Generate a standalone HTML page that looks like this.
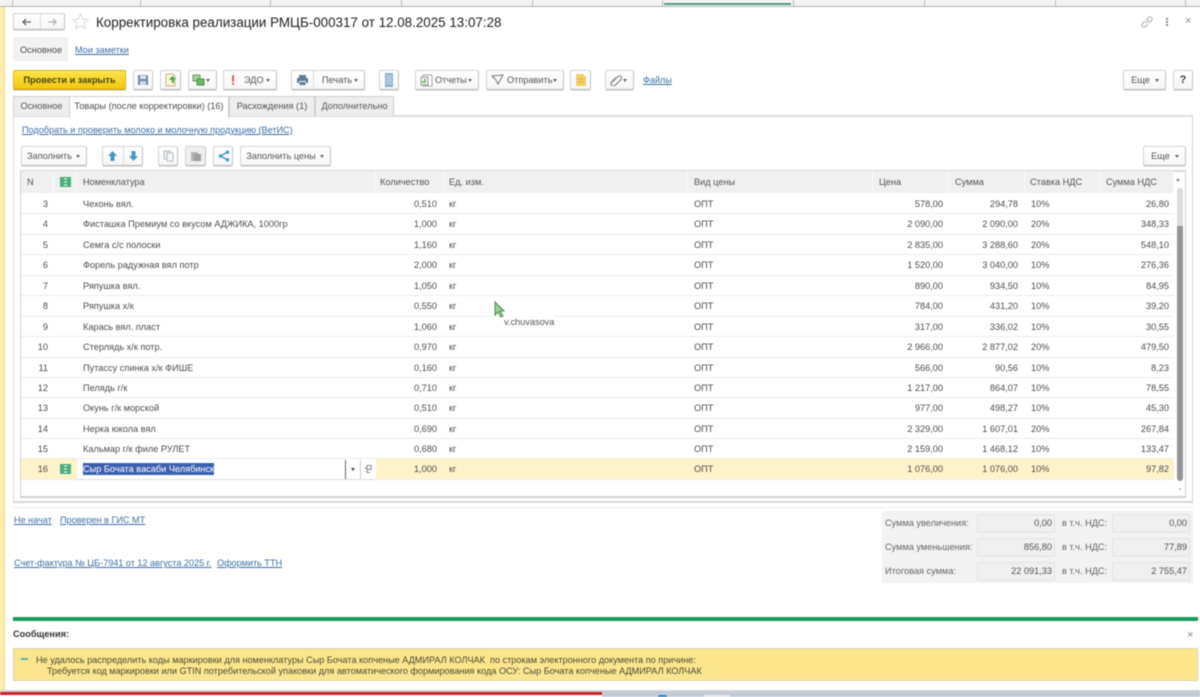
<!DOCTYPE html>
<html lang="ru"><head><meta charset="utf-8"><title>Корректировка реализации</title>
<style>
html,body{margin:0;padding:0;background:#fff}
#p{position:relative;width:1200px;height:697px;overflow:hidden;background:#fff;font:9.2px/12px "Liberation Sans","Noto Sans CJK SC",sans-serif;color:#4d4d4d;filter:blur(.45px)}
#p div,#p span,#p a,#p svg{position:absolute}
.t{white-space:nowrap}
a{color:#3b6ea8;text-decoration:underline;white-space:nowrap;font-size:9.1px}
.b{box-sizing:border-box;background:linear-gradient(#fff,#f6f6f6);border:1px solid #d2d2d2;border-bottom:1px solid #b4b4b4;border-right-color:#c4c4c4;border-radius:2px;height:20px;top:70px;white-space:nowrap;text-align:center;line-height:18px;color:#555;box-shadow:0 1px 0 #e4e4e4}
.c::after{content:"";position:absolute;right:6px;top:8px;border:2px solid transparent;border-top:3px solid #666;border-bottom:0}
.d{top:0;bottom:0;width:1px;background:#ddd}
.tab{box-sizing:border-box;top:96px;height:20px;background:#eeeeee;border:1px solid #cfcfcf;border-bottom:0;text-align:center;line-height:18px;white-space:nowrap;color:#555}
.h{top:171px;height:22px;background:#f0f0f0;border-right:1px solid #fafafa;box-sizing:border-box;line-height:22px;padding-left:5px;color:#555;white-space:nowrap}
.r{left:21px;width:1153px;height:20px;border-bottom:1px solid #ececec;box-sizing:border-box}
.r span{top:4px;white-space:nowrap}
.n{left:0;width:27px;text-align:right}
.g{left:62px}
.q{left:340px;width:76px;text-align:right}
.u{left:428px}
.v{left:673px}
.pr{left:850px;width:72px;text-align:right}
.s{left:930px;width:67px;text-align:right}
.nd{left:1010px}
.x{left:1080px;width:68px;text-align:right}
.f{box-sizing:border-box;background:#efefef;border:1px solid #e2e2e2;width:78px;height:19px;text-align:right;padding-right:2px;line-height:17px;color:#555;border-radius:2px}
.l{color:#666;white-space:nowrap}
.m{color:#4a4a35;font-size:9.15px}
</style></head><body><div id="p">

<div style="left:0;top:0;width:1200px;height:6px;background:#f2f2f2;border-bottom:1px solid #b5b5b5"></div>
<div style="left:12px;top:0;width:1px;height:6px;background:#bbb"></div>
<div style="left:140px;top:0;width:1px;height:6px;background:#bbb"></div>
<div style="left:270px;top:0;width:1px;height:6px;background:#bbb"></div>
<div style="left:401px;top:0;width:1px;height:6px;background:#bbb"></div>
<div style="left:532px;top:0;width:1px;height:6px;background:#bbb"></div>
<div style="left:662px;top:0;width:1px;height:6px;background:#bbb"></div>
<div style="left:793px;top:0;width:1px;height:6px;background:#bbb"></div>
<div style="left:924px;top:0;width:1px;height:6px;background:#bbb"></div>
<div style="left:1055px;top:0;width:1px;height:6px;background:#bbb"></div>
<div style="left:1185px;top:0;width:1px;height:6px;background:#bbb"></div>
<div style="left:664px;top:3px;width:127px;height:2px;background:#4d9a7c"></div>
<div style="left:0;top:7px;width:4px;height:683px;background:#fdeca2;border-right:1px solid #e6dfa8"></div>

<div class="b" style="left:13px;top:13px;width:52px;height:17px"><div class="d" style="left:26px"></div>
<svg style="left:7px;top:3px" width="12" height="10" viewBox="0 0 12 10"><path d="M2 5h8M5 2L2 5l3 3" fill="none" stroke="#666" stroke-width="1.3"/></svg>
<svg style="left:32px;top:3px" width="12" height="10" viewBox="0 0 12 10"><path d="M2 5h8M7 2l3 3-3 3" fill="none" stroke="#b0b0b0" stroke-width="1.3"/></svg></div>
<svg style="left:72px;top:13px" width="17" height="17" viewBox="0 0 18 18"><path d="M9 1l2.300 5.400 5.700.5-4.300 3.800 1.300 5.700L9 13.400 4 16.400l1.300-5.700L1 6.900l5.700-.5z" fill="#fff" stroke="#d6d6d6"/></svg>
<div class="t" style="left:96px;top:14px;font-size:13.4px;line-height:17px;color:#222">Корректировка реализации РМЦБ-000317 от 12.08.2025 13:07:28</div>
<svg style="left:1140px;top:15px" width="14" height="14" viewBox="0 0 14 14"><path d="M6 8l3-3M5 6L2.500 8.500a2 2 0 003 3L8 9M6 5l2.500-2.500a2 2 0 013 3L9 8" fill="none" stroke="#aaa"/></svg>
<div style="left:1166px;top:18px;width:2px;height:2px;background:#888;box-shadow:0 3px 0 #888,0 6px 0 #888"></div>
<div class="t" style="left:1185px;top:15px;color:#888;font-size:11px">×</div>

<div style="left:13px;top:37px;width:55px;height:24px;background:#f2f2f2;border-radius:2px"></div>
<div class="t" style="left:20px;top:44px">Основное</div>
<a style="left:75px;top:44px">Мои заметки</a>

<div class="b" style="left:13px;width:113px;background:linear-gradient(#fde548,#f2c70d);border-color:#d9b41f;border-bottom-color:#b39415;color:#4a4612;font-weight:bold">Провести и закрыть</div>
<div class="b" style="left:133px;width:20px"><svg style="left:3px;top:3px" width="12" height="12" viewBox="0 0 12 12"><path d="M1 1h9l1 1v9H1z" fill="#6d8aa8"/><rect x="3" y="1.500" width="6" height="3.500" fill="#dfe7ef"/><rect x="3" y="7" width="6" height="4" fill="#cfd9e3"/></svg></div>
<div class="b" style="left:160px;width:21px"><svg style="left:3px;top:2px" width="14" height="14" viewBox="0 0 14 14"><path d="M2 1h7l2 2v10H2z" fill="#fdf6cf" stroke="#c7b88a"/><path d="M5 7l3-4 4 3-2 1v3H8V7z" fill="#47a95a"/></svg></div>
<div class="b c" style="left:188px;width:29px"><svg style="left:3px;top:3px" width="13" height="12" viewBox="0 0 13 12"><rect x="1" y="1" width="7" height="6" fill="#a8cfa0" stroke="#6b9a62"/><rect x="5" y="5" width="7" height="6" fill="#6fb56f" stroke="#4c8f50"/></svg></div>
<div class="b c" style="left:223px;width:54px"><svg style="left:7px;top:4px" width="4" height="10" viewBox="0 0 5 12"><path d="M1.400 0h2.200v8H1.400zM1.400 9.400h2.200V12H1.400z" fill="#d9434a"/></svg><span class="t" style="left:20px;top:0">ЭДО</span></div>
<div class="b c" style="left:291px;width:74px"><div class="d" style="left:21px"></div><svg style="left:4px;top:3px" width="13" height="12" viewBox="0 0 13 12"><path d="M3 1h7v3H3zM1 4h11v5H10V7H3v2H1zM3.500 8h6v3h-6z" fill="#5d7d99"/></svg><span class="t" style="left:30px;top:0">Печать</span></div>
<div class="b" style="left:379px;width:20px"><svg style="left:5px;top:2px" width="8" height="14" viewBox="0 0 8 14"><rect width="8" height="14" fill="#8fb0cf"/><path d="M1 3h6M1 5.500h6M1 8h6M1 10.500h6" stroke="#dde8f2"/></svg></div>
<div class="b c" style="left:415px;width:64px"><svg style="left:4px;top:3px" width="13" height="13" viewBox="0 0 13 13"><rect x="3" y="1" width="9" height="11" fill="#fff" stroke="#a5a5a5"/><rect x="1" y="3" width="7" height="8" fill="#eef3ea" stroke="#9a9a9a"/><path d="M3 9V7M5 9V5" stroke="#5f9a5b" stroke-width="1.300"/></svg><span class="t" style="left:19px;top:0">Отчеты</span></div>
<div class="b c" style="left:486px;width:78px"><svg style="left:4px;top:3px" width="13" height="12" viewBox="0 0 13 12"><path d="M1 2l11-1-5 9-2-4z" fill="none" stroke="#777"/></svg><span class="t" style="left:20px;top:0">Отправить</span></div>
<div class="b" style="left:570px;width:21px"><svg style="left:5px;top:3px" width="10" height="12" viewBox="0 0 10 12"><path d="M0 0h7l3 3v9H0z" fill="#f2cd68"/><path d="M2 5h6M2 8h6" stroke="#e0b445"/></svg></div>
<div class="b c" style="left:605px;width:29px"><svg style="left:4px;top:3px" width="12" height="12" viewBox="0 0 12 12"><path d="M2.500 8L8 2.500a2 2 0 013 3L5.500 11a2.500 2.500 0 01-4-3L6 3.500" fill="none" stroke="#999" stroke-width="1.500"/></svg></div>
<a style="left:643px;top:74px">Файлы</a>
<div class="b c" style="left:1123px;width:43px;padding-right:8px">Еще</div>
<div class="b" style="left:1173px;width:20px;font-weight:bold;font-size:11px;color:#444">?</div>

<div style="left:13px;top:115px;width:1180px;height:388px;box-sizing:border-box;border:1px solid #d6d6d6;border-top:2px solid #dcdcdc;border-bottom:2px solid #d8d8d8"></div>
<div class="tab" style="left:13px;width:57px">Основное</div>
<div class="tab" style="left:69px;width:160px;height:22px;background:#fff;z-index:2;color:#4d4d4d">Товары (после корректировки) (16)</div>
<div class="tab" style="left:229px;width:86px">Расхождения (1)</div>
<div class="tab" style="left:315px;width:79px">Дополнительно</div>

<a style="left:22px;top:124px">Подобрать и проверить молоко и молочную продукцию (ВетИС)</a>

<div class="b c" style="left:21px;top:146px;width:66px;padding-right:9px">Заполнить</div>
<div class="b" style="left:102px;top:146px;width:41px"><div class="d" style="left:20px"></div>
<svg style="left:4px;top:3px" width="11" height="12" viewBox="0 0 11 12"><path d="M5.500 1L10 6H7.500v5h-4V6H1z" fill="#4a96c8"/></svg>
<svg style="left:25px;top:3px" width="11" height="12" viewBox="0 0 11 12"><path d="M5.500 11L10 6H7.500V1h-4v5H1z" fill="#4a96c8"/></svg></div>
<div class="b" style="left:158px;top:146px;width:20px"><svg style="left:4px;top:3px" width="11" height="12" viewBox="0 0 11 12"><path d="M1 1h6v8H1z" fill="#eef2f5" stroke="#b5bcc2"/><path d="M4 3h6v8H4z" fill="#f5f7f9" stroke="#b5bcc2"/></svg></div>
<div class="b" style="left:185px;top:146px;width:21px;background:#efefef"><svg style="left:4px;top:3px" width="12" height="12" viewBox="0 0 12 12"><path d="M1 2h7v9H1z" fill="#b5b5b5"/><path d="M4 4h7v7H4z" fill="#9f9f9f"/></svg></div>
<div class="b" style="left:213px;top:146px;width:20px"><svg style="left:4px;top:3px" width="12" height="12" viewBox="0 0 12 12"><path d="M9.500 2L2.500 6l7 4" fill="none" stroke="#4a96c8" stroke-width="1.300"/><circle cx="9.500" cy="2.200" r="1.700" fill="#4a96c8"/><circle cx="2.500" cy="6" r="1.700" fill="#4a96c8"/><circle cx="9.500" cy="9.800" r="1.700" fill="#4a96c8"/></svg></div>
<div class="b c" style="left:240px;top:146px;width:91px;padding-right:9px">Заполнить цены</div>
<div class="b c" style="left:1143px;top:146px;width:43px;padding-right:8px">Еще</div>

<div style="left:20px;top:170px;width:1166px;height:328px;box-sizing:border-box;border:1px solid #d2d2d2;border-bottom:2px solid #cfcfcf;border-top:2px solid #d8d8d8"></div>
<div class="h" style="left:21px;width:33px;padding-left:6px">N</div>
<div class="h" style="left:54px;width:23px"><svg style="left:6px;top:6px" width="11" height="10" viewBox="0 0 11 10"><rect width="11" height="10" fill="#4fae7c"/><path d="M4 2h3M4 5h3M4 8h3" stroke="#fff"/></svg></div>
<div class="h" style="left:77px;width:299px;padding-left:6px">Номенклатура</div>
<div class="h" style="left:376px;width:68px;padding-left:4px">Количество</div>
<div class="h" style="left:444px;width:244px">Ед. изм.</div>
<div class="h" style="left:688px;width:185px;padding-left:6px">Вид цены</div>
<div class="h" style="left:873px;width:75px;padding-left:6px">Цена</div>
<div class="h" style="left:948px;width:77px;padding-left:7px">Сумма</div>
<div class="h" style="left:1025px;width:75px">Ставка НДС</div>
<div class="h" style="left:1100px;width:74px;padding-left:6px">Сумма НДС</div>

<div class="r" style="top:194px"><span class="n">3</span><span class="g">Чехонь вял.</span><span class="q">0,510</span><span class="u">кг</span><span class="v">ОПТ</span><span class="pr">578,00</span><span class="s">294,78</span><span class="nd">10%</span><span class="x">26,80</span></div>
<div class="r" style="top:214px;height:21px"><span class="n">4</span><span class="g">Фисташка Премиум со вкусом АДЖИКА, 1000гр</span><span class="q">1,000</span><span class="u">кг</span><span class="v">ОПТ</span><span class="pr">2 090,00</span><span class="s">2 090,00</span><span class="nd">20%</span><span class="x">348,33</span></div>
<div class="r" style="top:235px"><span class="n">5</span><span class="g">Семга с/с полоски</span><span class="q">1,160</span><span class="u">кг</span><span class="v">ОПТ</span><span class="pr">2 835,00</span><span class="s">3 288,60</span><span class="nd">20%</span><span class="x">548,10</span></div>
<div class="r" style="top:255px;height:21px"><span class="n">6</span><span class="g">Форель радужная вял потр</span><span class="q">2,000</span><span class="u">кг</span><span class="v">ОПТ</span><span class="pr">1 520,00</span><span class="s">3 040,00</span><span class="nd">10%</span><span class="x">276,36</span></div>
<div class="r" style="top:276px"><span class="n">7</span><span class="g">Ряпушка вял.</span><span class="q">1,050</span><span class="u">кг</span><span class="v">ОПТ</span><span class="pr">890,00</span><span class="s">934,50</span><span class="nd">10%</span><span class="x">84,95</span></div>
<div class="r" style="top:296px;height:21px"><span class="n">8</span><span class="g">Ряпушка х/к</span><span class="q">0,550</span><span class="u">кг</span><span class="v">ОПТ</span><span class="pr">784,00</span><span class="s">431,20</span><span class="nd">10%</span><span class="x">39,20</span></div>
<div class="r" style="top:317px"><span class="n">9</span><span class="g">Карась вял. пласт</span><span class="q">1,060</span><span class="u">кг</span><span class="v">ОПТ</span><span class="pr">317,00</span><span class="s">336,02</span><span class="nd">10%</span><span class="x">30,55</span></div>
<div class="r" style="top:337px;height:21px"><span class="n">10</span><span class="g">Стерлядь х/к потр.</span><span class="q">0,970</span><span class="u">кг</span><span class="v">ОПТ</span><span class="pr">2 966,00</span><span class="s">2 877,02</span><span class="nd">20%</span><span class="x">479,50</span></div>
<div class="r" style="top:358px"><span class="n">11</span><span class="g">Путассу спинка х/к ФИШЕ</span><span class="q">0,160</span><span class="u">кг</span><span class="v">ОПТ</span><span class="pr">566,00</span><span class="s">90,56</span><span class="nd">10%</span><span class="x">8,23</span></div>
<div class="r" style="top:378px;height:20px"><span class="n">12</span><span class="g">Пелядь г/к</span><span class="q">0,710</span><span class="u">кг</span><span class="v">ОПТ</span><span class="pr">1 217,00</span><span class="s">864,07</span><span class="nd">10%</span><span class="x">78,55</span></div>
<div class="r" style="top:398px;height:21px"><span class="n">13</span><span class="g">Окунь г/к морской</span><span class="q">0,510</span><span class="u">кг</span><span class="v">ОПТ</span><span class="pr">977,00</span><span class="s">498,27</span><span class="nd">10%</span><span class="x">45,30</span></div>
<div class="r" style="top:419px"><span class="n">14</span><span class="g">Нерка юкола вял</span><span class="q">0,690</span><span class="u">кг</span><span class="v">ОПТ</span><span class="pr">2 329,00</span><span class="s">1 607,01</span><span class="nd">20%</span><span class="x">267,84</span></div>
<div class="r" style="top:439px"><span class="n">15</span><span class="g">Кальмар г/к филе РУЛЕТ</span><span class="q">0,680</span><span class="u">кг</span><span class="v">ОПТ</span><span class="pr">2 159,00</span><span class="s">1 468,12</span><span class="nd">10%</span><span class="x">133,47</span></div>
<div class="r" style="top:459px;height:21px;background:#fdf3c9"><span class="n">16</span><span class="q">1,000</span><span class="u">кг</span><span class="v">ОПТ</span><span class="pr">1 076,00</span><span class="s">1 076,00</span><span class="nd">10%</span><span class="x">97,82</span></div>
<svg style="left:60px;top:464px" width="11" height="10" viewBox="0 0 11 10"><rect width="11" height="10" fill="#4fae7c"/><path d="M4 2h3M4 5h3M4 8h3" stroke="#fff"/></svg>
<div style="left:77px;top:459px;width:299px;height:21px;background:#fff;border-bottom:1px solid #ddd;box-sizing:border-box"></div>
<div style="left:345px;top:460px;width:1px;height:19px;background:#666"></div>
<div style="left:360px;top:460px;width:1px;height:19px;background:#ccc"></div>
<div style="left:351px;top:468px;border:2px solid transparent;border-top:3px solid #444;border-bottom:0"></div>
<svg style="left:364px;top:465px" width="8" height="8" viewBox="0 0 8 8"><path d="M3 .5h4v4H3zM.500 3h2.500v4.500h3" fill="none" stroke="#888"/></svg>
<div class="t" style="left:83px;top:463px;background:#3d5fb0;color:#fff;height:12px;line-height:12px;width:131px;overflow:hidden">Сыр Бочата васаби Челябинск</div>

<div style="left:1176px;top:178px;border:2.500px solid transparent;border-bottom:3px solid #888;border-top:0"></div>
<div style="left:1177px;top:188px;width:6px;height:38px;background:#dcdcdc;border-radius:3px 3px 0 0"></div>
<div style="left:1177px;top:226px;width:6px;height:255px;background:#959595;border-radius:0 0 3px 3px"></div>
<div style="left:1178px;top:488px;border:2px solid transparent;border-top:3px solid #ccc;border-bottom:0"></div>

<svg style="left:494px;top:301px;z-index:3" width="11" height="17" viewBox="0 0 11 17"><path d="M1 1v13l3-3 3 5 2-1-3-5h4z" fill="#9ad092" stroke="#4d8a4f"/></svg>
<div class="t" style="left:503px;top:316px;color:#555;background:#fff;padding:0 1px">v.chuvasova</div>

<div style="left:13px;top:507px;width:1180px;border-top:1px dotted #d8d8d8"></div>
<a style="left:14px;top:514px">Не начат</a>
<a style="left:60px;top:514px">Проверен в ГИС МТ</a>
<a style="left:14px;top:557px">Счет-фактура № ЦБ-7941 от 12 августа 2025 г.</a>
<a style="left:217px;top:557px">Оформить ТТН</a>

<div style="left:882px;top:511px;width:311px;height:72px;background:#f2f2f2"></div>
<div class="l" style="left:885px;top:517px">Сумма увеличения:</div>
<div class="l" style="left:885px;top:541px">Сумма уменьшения:</div>
<div class="l" style="left:885px;top:565px">Итоговая сумма:</div>
<div class="l" style="left:1062px;top:517px">в т.ч. НДС:</div>
<div class="l" style="left:1062px;top:541px">в т.ч. НДС:</div>
<div class="l" style="left:1062px;top:565px">в т.ч. НДС:</div>
<div class="f" style="left:977px;top:514px">0,00</div>
<div class="f" style="left:977px;top:538px">856,80</div>
<div class="f" style="left:977px;top:562px">22 091,33</div>
<div class="f" style="left:1112px;top:514px">0,00</div>
<div class="f" style="left:1112px;top:538px">77,89</div>
<div class="f" style="left:1112px;top:562px">2 755,47</div>

<div style="left:13px;top:617px;width:1185px;height:4px;background:#169b5b"></div>
<div class="t" style="left:13px;top:628px;font-weight:bold;color:#333">Сообщения:</div>
<div class="t" style="left:1187px;top:629px;color:#888;font-size:11px">×</div>
<div style="left:13px;top:648px;width:1185px;height:33px;box-sizing:border-box;background:#fde58e;border:1px solid #d9d2a8"></div>
<div style="left:21px;top:658px;width:7px;height:2px;background:#5ab3ad"></div>
<div class="t m" style="left:36px;top:654px">Не удалось распределить коды маркировки для номенклатуры Сыр Бочата копченые АДМИРАЛ КОЛЧАК&nbsp; по строкам электронного документа по причине:</div>
<div class="t m" style="left:47px;top:665px">Требуется код маркировки или GTIN потребительской упаковки для автоматического формирования кода ОСУ: Сыр Бочата копченые АДМИРАЛ КОЛЧАК</div>

<div style="left:0;top:690px;width:1200px;height:7px;background:#c3cbd6;border-top:1px solid #d5d5d5;box-sizing:border-box"></div>
<div style="left:0;top:692px;width:602px;height:3px;background:#d4202a"></div>
<div style="left:0;top:695px;width:602px;height:2px;background:#fff"></div>
<div style="left:658px;top:695px;width:9px;height:2px;background:#2a7fc0;border-radius:4px 4px 0 0"></div>
<div style="left:704px;top:695px;width:26px;height:2px;background:#e8e8e8"></div>
</div></body></html>
